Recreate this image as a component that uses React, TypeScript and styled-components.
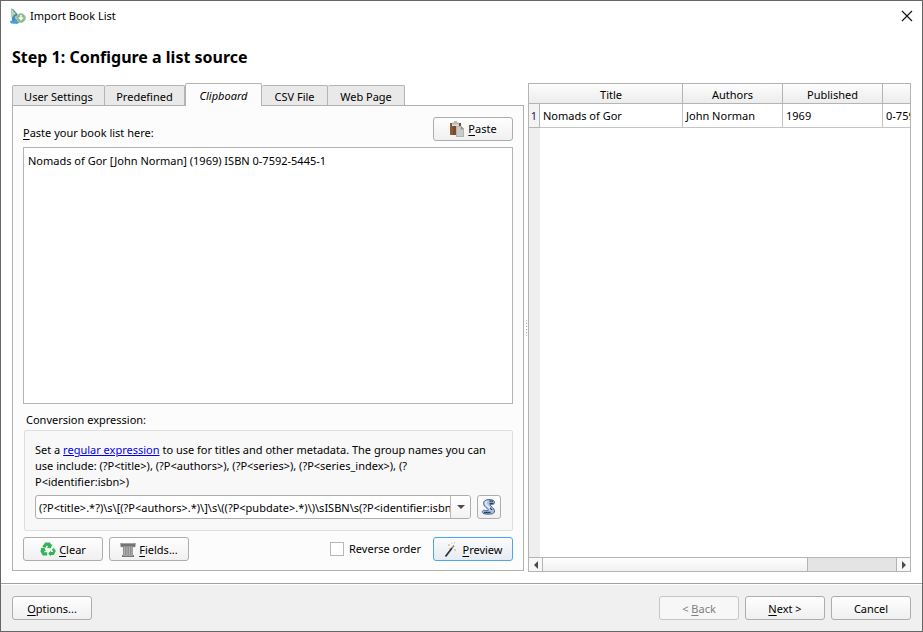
import React from "react";
import styled, { createGlobalStyle, css } from "styled-components";

const Global = createGlobalStyle`
  *, *::before, *::after { box-sizing: border-box; }
  body { margin: 0; background: #fff; }
  body, button, input, textarea, select, table {
    font-family: "Noto Sans", "Open Sans", sans-serif;
    font-size: 11px;
    line-height: 16px;
    color: #000;
  }
  u { text-underline-offset: 2px; }
`;

const Window = styled.div`
  display: flex;
  flex-direction: column;
  min-height: 100vh;
  border: 1px solid #666;
  background: #fff;
`;

const TitleBar = styled.header`
  display: flex;
  align-items: center;
  gap: 4px;
  height: 30px;
  padding: 0 9px;
`;

const WindowTitle = styled.span`
  flex: 1;
`;

const CloseButton = styled.button`
  display: flex;
  padding: 0;
  border: 0;
  background: none;
`;

const Heading = styled.h1`
  margin: 14px 11px 14px;
  font-size: 16px;
  line-height: 24px;
  font-weight: 700;
`;

const Body = styled.main`
  flex: 1;
  display: grid;
  grid-template-columns: minmax(0, 512fr) 4px minmax(0, 383fr);
  padding: 0 11px 11px;
`;

const Source = styled.section`
  display: flex;
  flex-direction: column;
  padding-bottom: 1px;
`;

const TabList = styled.div`
  display: flex;
  align-items: flex-end;
  height: 22px;
`;

const Tab = styled.button<{ $width: number; $active?: boolean }>`
  width: ${(p) => p.$width}px;
  height: 20px;
  padding: 3px 0 0;
  border: 1px solid #b4b4b4;
  border-width: 1px 1px 0 0;
  border-radius: 2px 2px 0 0;
  background: #e9e9e9;
  white-space: nowrap;
  &:first-child { border-left-width: 1px; }
  ${(p) =>
    p.$active &&
    css`
      position: relative;
      height: 23px;
      margin-bottom: -1px;
      padding: 2px 0 0;
      border-left-width: 1px;
      background: #fcfcfc;
      font-style: italic;
    `}
`;

const Pane = styled.div`
  flex: 1;
  display: flex;
  flex-direction: column;
  padding: 10px 10px 9px;
  border: 1px solid #b0b0b0;
  background: #fcfcfc;
`;

const Row = styled.div`
  display: flex;
  align-items: center;
  gap: 6px;
`;

const Spacer = styled.div`
  flex: 1;
`;

const PasteLabel = styled.label`
  flex: 1;
  padding-top: 9px;
`;

const Button = styled.button<{ $focused?: boolean }>`
  display: flex;
  align-items: center;
  justify-content: center;
  gap: 3px;
  width: 80px;
  height: 24px;
  padding: 1px 0 0;
  border: 1px solid ${(p) => (p.$focused ? "#4ba6ee" : "#adadad")};
  border-radius: 3px;
  background: ${(p) =>
    p.$focused ? "linear-gradient(#fafbfd, #e6ecf2)" : "linear-gradient(#fefefe, #f0f0f0)"};
  white-space: nowrap;
  &:disabled {
    border-color: #c6c6c6;
    background: #f7f7f7;
    color: #808080;
  }
`;

const IconButton = styled(Button)`
  width: 24px;
  padding: 0;
`;

const BookText = styled.textarea`
  flex: 1;
  min-height: 80px;
  margin: 6px 0 8px;
  padding: 5px 4px;
  border: 1px solid #b4b4b4;
  background: #fff;
  resize: none;
  outline: 0;
`;

const GroupTitle = styled.h2`
  margin: 0 3px 2px;
  font-size: 11px;
  line-height: 16px;
  font-weight: 400;
`;

const GroupBox = styled.div`
  margin: 0 0 6px 1px;
  padding: 11px 11px 11px 10px;
  border: 1px solid #dedede;
  border-radius: 2px;
  background: #f8f8f8;
`;

const Help = styled.p`
  margin: 0 0 5px;
  white-space: nowrap;
  a { color: #0000ee; }
`;

const Combo = styled.div`
  flex: 1;
  display: flex;
  min-width: 0;
  height: 24px;
  border: 1px solid #adadad;
  border-radius: 3px;
  background: #fff;
  overflow: hidden;
`;

const ComboInput = styled.input`
  flex: 1;
  min-width: 0;
  padding: 1px 0 0 3px;
  border: 0;
  background: none;
  outline: 0;
`;

const ComboArrow = styled.button`
  display: flex;
  align-items: center;
  justify-content: center;
  width: 20px;
  padding: 0;
  border: 0;
  border-left: 1px solid #b8b8b8;
  background: linear-gradient(#fff, #f2f2f2);
`;

const CheckLabel = styled.label`
  display: flex;
  align-items: center;
  gap: 5px;
  margin-right: 6px;
`;

const CheckBox = styled.input`
  appearance: none;
  width: 14px;
  height: 14px;
  margin: 0;
  border: 1px solid #b8b8b8;
  background: #fff;
`;

const Splitter = styled.div`
  display: flex;
  align-items: center;
  justify-content: center;
`;

const Preview = styled.section`
  display: flex;
  flex-direction: column;
  min-width: 0;
  border: 1px solid #b4b4b4;
`;

const Viewport = styled.div`
  flex: 1;
  overflow: hidden;
  background: linear-gradient(to right, #efefef 11px, #fff 11px);
`;

const Grid = styled.table`
  table-layout: fixed;
  width: 454px;
  border-collapse: separate;
  border-spacing: 0;
  background: #fff;
`;

const HeadCell = styled.th<{ $width: number; $plain?: boolean }>`
  width: ${(p) => p.$width}px;
  height: 20px;
  padding: 2px 0 0;
  border: solid #b4b4b4;
  border-width: 0 ${(p) => (p.$plain ? 0 : 1)}px 1px 0;
  background: linear-gradient(#fdfdfd, #ececec);
  font-weight: 400;
`;

const RowHead = styled.th`
  height: 24px;
  padding: 1px 0 0;
  border: solid #b4b4b4;
  border-width: 0 1px 1px 0;
  background: #f3f3f3;
  font-weight: 400;
  color: #3c1040;
`;

const Cell = styled.td`
  height: 24px;
  padding: 1px 3px 0;
  border: solid #c4c4c4;
  border-width: 0 1px 1px 0;
  white-space: nowrap;
`;

const ScrollBar = styled.div`
  display: flex;
  height: 14px;
  border-top: 1px solid #b4b4b4;
  background: #e4e4e4;
`;

const ScrollArrow = styled.button<{ $end?: boolean }>`
  display: flex;
  align-items: center;
  justify-content: center;
  width: 14px;
  padding: 0;
  border: solid #b4b4b4;
  border-width: ${(p) => (p.$end ? "0 0 0 1px" : "0 1px 0 0")};
  background: #f8f8f8;
`;

const Track = styled.div`
  flex: 1;
`;

const Thumb = styled.div`
  width: 75%;
  height: 100%;
  border-right: 1px solid #b4b4b4;
  background: linear-gradient(#fefefe, #f0f0f0);
`;

const Footer = styled.footer`
  display: flex;
  align-items: center;
  gap: 6px;
  height: 48px;
  padding: 1px 11px 0;
  border-top: 1px solid #a0a0a0;
  box-shadow: inset 0 1px #fff;
  background: #f0f0f0;
`;

const AppIcon = () => (
  <svg width="16" height="16" viewBox="0 0 16 16" aria-hidden="true">
    <path d="M1 0.5 L3 1 7.5 6 10 14 8 15.5 1.5 15 0 13.5 2 12.5z" fill="#3d8fc4" />
    <path d="M1 0.500 L3 2 4.500 6 2 9.500z" fill="#b5d6b8" />
    <path d="M3.500 3.500l2 1.500-.5 2-1.500-1zM5 8l2 1-1.500 2.500z" fill="#e5d75c" />
    <path d="M0 13.500l5-1.500 4 2-2 1.800-6-.3z" fill="#4c9ddb" />
    <circle cx="11" cy="10" r="4.500" fill="#8fb889" stroke="#b9ceb5" />
    <path d="M11 7v4.500M9 9.500L11 11.500l2-2" fill="none" stroke="#f4faf3" strokeWidth="1.600" />
  </svg>
);

const PasteIcon = () => (
  <svg width="16" height="16" viewBox="0 0 16 16" aria-hidden="true">
    <path d="M1 2h11v12H1z" fill="#7b4a26" />
    <path d="M1 2h3v12H1z" fill="#8f5a32" />
    <path d="M3 1.500h2V0h3v1.500h2V4H3z" fill="#b9b9b5" />
    <path d="M3 3.500h7V5H3z" fill="#dededc" />
    <path d="M7 5h5l3 3v8H7z" fill="#b4b4b4" />
    <path d="M8 6h3.500v3H14v6H8z" fill="#cacaca" />
    <path d="M12 5l3 3h-3z" fill="#8c8c8c" />
  </svg>
);

const RecycleIcon = () => (
  <svg width="16" height="16" viewBox="0 0 16 16" aria-hidden="true">
    <g fill="#2fb457">
      <path d="M5.300 0.500h4.600l1.300 2.200 1.300-.7-1.700 4.200-4-.3 1.200-.8-1-1.900-1.700 2.800L2.200 4.500z" />
      <path d="M12 7.200l2-1.200 1.800 3-2 4h-3v1.600L8.300 11.500l2.500-3v1.500h2.400z" />
      <path d="M1.300 6.500L.2 6l4.200-.3 1.500 3.800-1.300-.6-.7 1.300h3.300v3.300H2.700L.4 9.300z" />
    </g>
  </svg>
);

const ColumnIcon = () => (
  <svg width="16" height="16" viewBox="0 0 16 16" aria-hidden="true">
    <path d="M.5 1h15v3.500L14 5.500 12.500 4h-9L2 5.500.5 4.500z" fill="#747474" />
    <path d="M3 4h10v9.500H3z" fill="#8e8e8e" />
    <path d="M4.500 5v8M7 5v8M9.500 5v8M12 5v8" stroke="#b4b4b4" />
    <path d="M2 13h12v2H2z" fill="#747474" />
    <path d="M1.500 1.500h13M3 13.500h10" stroke="#a4a4a4" />
  </svg>
);

const ScriptIcon = () => (
  <svg width="16" height="16" viewBox="0 0 16 16" aria-hidden="true">
    <path
      d="M3.500 2C5 .3 9 .3 11 1c2.500.3 3.500 3 1.500 4-1.500.5-3.500 0-3.500 1 1 1.500 4 3 4.500 5.500.3 2.500-1.500 3.500-4 3.500-2.500.3-5 .3-7.500-.7-1.500-1.300-.5-3.300 1.500-3 1.500.3 3.500.5 4-.5C6.500 9.500 3.500 8 2.700 5.500 2.300 4 2.500 3 3.500 2z"
      fill="#a9c0de"
      stroke="#46628a"
    />
    <path d="M6 2c-1.500 1.500-1.500 3 0 4.500 2 1.500 3.500 3 3.700 5" fill="none" stroke="#dfeaf8" strokeWidth="1.800" />
    <path d="M8.500 2.500c1-.8 2.500-.8 3.500 0M8.500 4.500h4M3 13.500h6.500M9 9l2 2" fill="none" stroke="#2b4266" strokeWidth="1.300" />
  </svg>
);

const WandIcon = () => (
  <svg width="16" height="16" viewBox="0 0 16 16" aria-hidden="true">
    <path d="M2.500 14.500L9 6" stroke="#333" strokeWidth="1.800" />
    <path d="M9 6l2-2.500" stroke="#8c8c8c" strokeWidth="1.800" />
    <path d="M6 2v2M5 3h2M11.500 0v1.500M6 6l1 1M12 7v2M11 8h2M8.500 1.500h1" stroke="#f0bd70" />
  </svg>
);

const CloseIcon = () => (
  <svg width="12" height="12" viewBox="0 0 12 12" aria-hidden="true">
    <path d="M1 1l10 10M11 1L1 11" stroke="#111" strokeWidth="1.100" />
  </svg>
);

const Arrow = ({ d, w = 8, h = 8 }: { d: string; w?: number; h?: number }) => (
  <svg width={w} height={h} viewBox={`0 0 ${w} ${h}`} aria-hidden="true">
    <path d={d} fill="#4c4c4c" />
  </svg>
);

const tabs = [
  { name: "User Settings", width: 93 },
  { name: "Predefined", width: 80 },
  { name: "Clipboard", width: 77 },
  { name: "CSV File", width: 66 },
  { name: "Web Page", width: 77 },
];

export default function App() {
  return (
    <>
      <Global />
      <Window>
        <TitleBar>
          <AppIcon />
          <WindowTitle>Import Book List</WindowTitle>
          <CloseButton aria-label="Close"><CloseIcon /></CloseButton>
        </TitleBar>
        <Heading>Step 1: Configure a list source</Heading>
        <Body>
          <Source>
            <TabList role="tablist">
              {tabs.map((t) => (
                <Tab
                  key={t.name}
                  role="tab"
                  aria-selected={t.name === "Clipboard"}
                  $width={t.width}
                  $active={t.name === "Clipboard"}
                >
                  {t.name}
                </Tab>
              ))}
            </TabList>
            <Pane role="tabpanel">
              <Row>
                <PasteLabel htmlFor="books"><u>P</u>aste your book list here:</PasteLabel>
                <Button><PasteIcon /><span><u>P</u>aste</span></Button>
              </Row>
              <BookText
                id="books"
                spellCheck={false}
                defaultValue="Nomads of Gor [John Norman] (1969) ISBN 0-7592-5445-1"
              />
              <GroupTitle>Conversion expression:</GroupTitle>
              <GroupBox>
                <Help>
                  Set a <a href="#regex">regular expression</a> to use for titles and other metadata. The group names you can
                  <br />
                  use include: (?P&lt;title&gt;), (?P&lt;authors&gt;), (?P&lt;series&gt;), (?P&lt;series_index&gt;), (?
                  <br />
                  P&lt;identifier:isbn&gt;)
                </Help>
                <Row>
                  <Combo>
                    <ComboInput
                      aria-label="Conversion expression"
                      spellCheck={false}
                      defaultValue={"(?P<title>.*?)\\s\\[(?P<authors>.*)\\]\\s\\((?P<pubdate>.*)\\)\\sISBN\\s(?P<identifier:isbn>.*)"}
                    />
                    <ComboArrow aria-label="Show expressions"><Arrow d="M0 0h8L4 4z" h={4} /></ComboArrow>
                  </Combo>
                  <IconButton aria-label="Saved expressions"><ScriptIcon /></IconButton>
                </Row>
              </GroupBox>
              <Row>
                <Button><RecycleIcon /><span><u>C</u>lear</span></Button>
                <Button><ColumnIcon /><span><u>F</u>ields...</span></Button>
                <Spacer />
                <CheckLabel><CheckBox type="checkbox" />Reverse order</CheckLabel>
                <Button $focused><WandIcon /><span><u>P</u>review</span></Button>
              </Row>
            </Pane>
          </Source>
          <Splitter>
            <svg width="3" height="16" viewBox="0 0 3 16" aria-hidden="true">
              <path d="M1.500 0v16" stroke="#b0b0b0" strokeDasharray="1 2" />
            </svg>
          </Splitter>
          <Preview>
            <Viewport>
              <Grid>
                <thead>
                  <tr>
                    <HeadCell $width={11} $plain />
                    <HeadCell $width={143}>Title</HeadCell>
                    <HeadCell $width={100}>Authors</HeadCell>
                    <HeadCell $width={100}>Published</HeadCell>
                    <HeadCell $width={100} />
                  </tr>
                </thead>
                <tbody>
                  <tr>
                    <RowHead>1</RowHead>
                    <Cell>Nomads of Gor</Cell>
                    <Cell>John Norman</Cell>
                    <Cell>1969</Cell>
                    <Cell>0-7592-5445-1</Cell>
                  </tr>
                </tbody>
              </Grid>
            </Viewport>
            <ScrollBar>
              <ScrollArrow aria-label="Scroll left"><Arrow d="M6 0v8L2 4z" /></ScrollArrow>
              <Track><Thumb /></Track>
              <ScrollArrow $end aria-label="Scroll right"><Arrow d="M2 0v8L6 4z" /></ScrollArrow>
            </ScrollBar>
          </Preview>
        </Body>
        <Footer>
          <Button><span><u>O</u>ptions...</span></Button>
          <Spacer />
          <Button disabled><span>&lt; <u>B</u>ack</span></Button>
          <Button><span><u>N</u>ext &gt;</span></Button>
          <Button>Cancel</Button>
        </Footer>
      </Window>
    </>
  );
}
